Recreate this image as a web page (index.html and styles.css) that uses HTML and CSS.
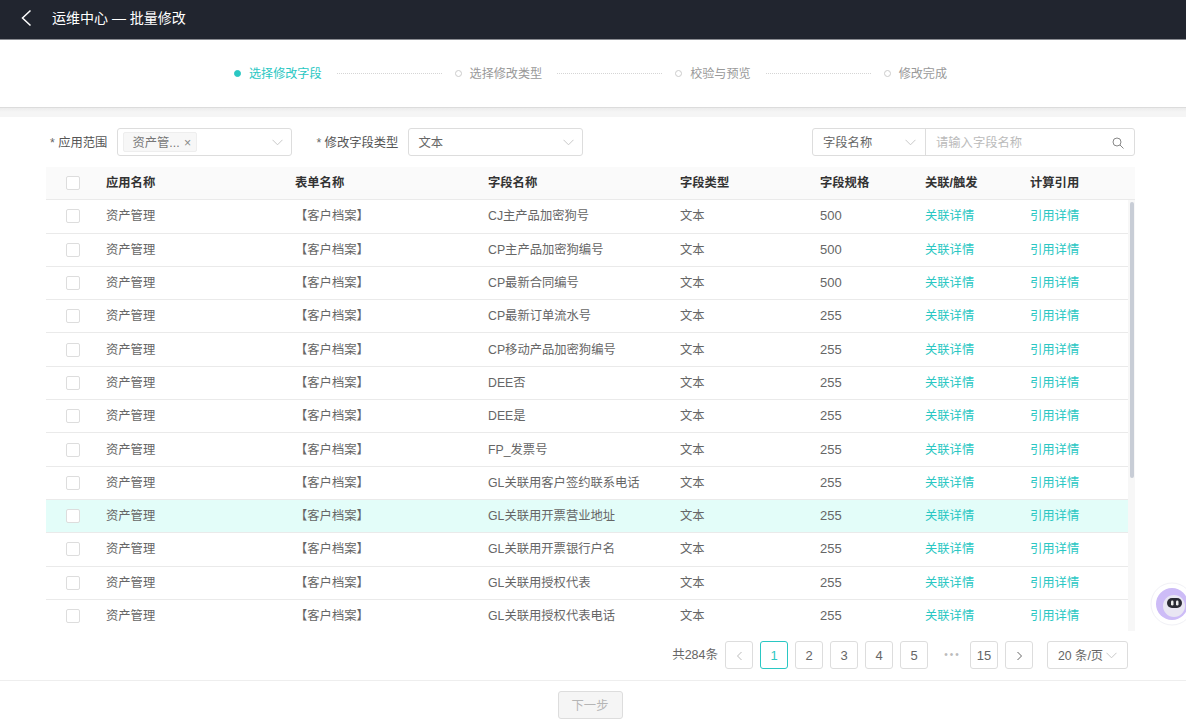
FILE: index.html
```html
<!DOCTYPE html>
<html lang="zh-CN">

<head>
  <meta charset="UTF-8">
  <title>运维中心 — 批量修改</title>
  <link rel="stylesheet" href="styles.css">
</head>

<body>

  <!-- 顶栏 -->
  <header class="topbar">
    <svg class="back" width="12" height="18" viewBox="0 0 12 18"><path d="M10.5 1.5 2.5 9l8 7.5" /></svg>
    <span class="title">运维中心 — 批量修改</span>
  </header>

  <!-- 步骤条 -->
  <div class="steps">
    <span class="dot active"></span><span class="step-name active">选择修改字段</span><span class="step-line"></span>
    <span class="dot"></span><span class="step-name">选择修改类型</span><span class="step-line"></span>
    <span class="dot"></span><span class="step-name">校验与预览</span><span class="step-line"></span>
    <span class="dot"></span><span class="step-name">修改完成</span>
  </div>

  <main class="content">
    <!-- 筛选 -->
    <div class="filters">
      <label class="req">应用范围</label>
      <div class="select scope">
        <span class="tag">资产管... <i>×</i></span>
        <svg class="arrow" width="11" height="7" viewBox="0 0 11 7"><path d="M.5.8l5 5 5-5" /></svg>
      </div>
      <label class="req type-label">修改字段类型</label>
      <div class="select scope">
        <span class="select-text">文本</span>
        <svg class="arrow" width="11" height="7" viewBox="0 0 11 7"><path d="M.5.8l5 5 5-5" /></svg>
      </div>
      <div class="search">
        <div class="search-field">
          <span>字段名称</span>
          <svg class="arrow" width="11" height="7" viewBox="0 0 11 7"><path d="M.5.8l5 5 5-5" /></svg>
        </div>
        <div class="search-input">
          <span>请输入字段名称</span>
          <svg class="glass" width="12" height="12" viewBox="0 0 12 12"><circle cx="5" cy="5" r="4" /><path d="M8 8l3.500 3.500" /></svg>
        </div>
      </div>
    </div>

    <!-- 表格 -->
    <div class="table">
      <div class="row head">
        <span class="check"></span><span>应用名称</span><span>表单名称</span><span>字段名称</span><span>字段类型</span><span>字段规格</span><span>关联/触发</span><span>计算引用</span>
      </div>
      <div class="table-body">
        <div class="rows">
          <div class="row"><span class="check"></span><span>资产管理</span><span>【客户档案】</span><span>CJ主产品加密狗号</span><span>文本</span><span class="num">500</span><a href="#">关联详情</a><a href="#">引用详情</a></div>
          <div class="row"><span class="check"></span><span>资产管理</span><span>【客户档案】</span><span>CP主产品加密狗编号</span><span>文本</span><span class="num">500</span><a href="#">关联详情</a><a href="#">引用详情</a></div>
          <div class="row"><span class="check"></span><span>资产管理</span><span>【客户档案】</span><span>CP最新合同编号</span><span>文本</span><span class="num">500</span><a href="#">关联详情</a><a href="#">引用详情</a></div>
          <div class="row"><span class="check"></span><span>资产管理</span><span>【客户档案】</span><span>CP最新订单流水号</span><span>文本</span><span class="num">255</span><a href="#">关联详情</a><a href="#">引用详情</a></div>
          <div class="row"><span class="check"></span><span>资产管理</span><span>【客户档案】</span><span>CP移动产品加密狗编号</span><span>文本</span><span class="num">255</span><a href="#">关联详情</a><a href="#">引用详情</a></div>
          <div class="row"><span class="check"></span><span>资产管理</span><span>【客户档案】</span><span>DEE否</span><span>文本</span><span class="num">255</span><a href="#">关联详情</a><a href="#">引用详情</a></div>
          <div class="row"><span class="check"></span><span>资产管理</span><span>【客户档案】</span><span>DEE是</span><span>文本</span><span class="num">255</span><a href="#">关联详情</a><a href="#">引用详情</a></div>
          <div class="row"><span class="check"></span><span>资产管理</span><span>【客户档案】</span><span>FP_发票号</span><span>文本</span><span class="num">255</span><a href="#">关联详情</a><a href="#">引用详情</a></div>
          <div class="row"><span class="check"></span><span>资产管理</span><span>【客户档案】</span><span>GL关联用客户签约联系电话</span><span>文本</span><span class="num">255</span><a href="#">关联详情</a><a href="#">引用详情</a></div>
          <div class="row hover"><span class="check"></span><span>资产管理</span><span>【客户档案】</span><span>GL关联用开票营业地址</span><span>文本</span><span class="num">255</span><a href="#">关联详情</a><a href="#">引用详情</a></div>
          <div class="row"><span class="check"></span><span>资产管理</span><span>【客户档案】</span><span>GL关联用开票银行户名</span><span>文本</span><span class="num">255</span><a href="#">关联详情</a><a href="#">引用详情</a></div>
          <div class="row"><span class="check"></span><span>资产管理</span><span>【客户档案】</span><span>GL关联用授权代表</span><span>文本</span><span class="num">255</span><a href="#">关联详情</a><a href="#">引用详情</a></div>
          <div class="row"><span class="check"></span><span>资产管理</span><span>【客户档案】</span><span>GL关联用授权代表电话</span><span>文本</span><span class="num">255</span><a href="#">关联详情</a><a href="#">引用详情</a></div>
        </div>
        <div class="scrollbar"><div class="thumb"></div></div>
      </div>
    </div>

    <!-- 分页 -->
    <div class="pager">
      <span class="total">共284条</span>
      <span class="page prev"><svg width="7" height="10" viewBox="0 0 7 10"><path d="M5.500 1 1.500 5l4 4" /></svg></span>
      <span class="page current">1</span>
      <span class="page">2</span>
      <span class="page">3</span>
      <span class="page">4</span>
      <span class="page">5</span>
      <span class="more">•••</span>
      <span class="page">15</span>
      <span class="page next"><svg width="7" height="10" viewBox="0 0 7 10"><path d="M1.500 1l4 4-4 4" /></svg></span>
      <span class="page-size">20 条/页<svg class="arrow" width="11" height="7" viewBox="0 0 11 7"><path d="M.5.8l5 5 5-5" /></svg></span>
    </div>
  </main>

  <!-- 底部 -->
  <footer class="footer">
    <button type="button" class="next-btn" disabled>下一步</button>
  </footer>

  <!-- 悬浮机器人 -->
  <svg class="robot" width="44" height="44" viewBox="0 0 44 44">
    <circle cx="22" cy="22" r="21" fill="#fff" stroke="#f1f1f6" />
    <circle cx="22" cy="22" r="16" fill="#cdbcf7" />
    <circle cx="24" cy="24" r="11" fill="#e9e6f3" />
    <rect x="17" y="16" width="15" height="10" rx="5" fill="#2b2b35" />
    <rect x="21" y="18.500" width="2.500" height="5" rx="1.200" fill="#eee" />
    <rect x="26" y="18.500" width="2.500" height="5" rx="1.200" fill="#eee" />
  </svg>

</body>

</html>
```

FILE: styles.css
```css
body {
  margin: 0;
  height: 720px;
  display: flex;
  flex-direction: column;
  overflow: hidden;
  background: #fff;
  font-family: "Liberation Sans", "Noto Sans CJK SC", sans-serif;
  font-size: 12.3px;
  line-height: 18px;
  color: #666;
}

/* 顶栏 */
.topbar {
  height: 35px;
  flex: none;
  display: flex;
  align-items: center;
  background: #21252f;
  border-bottom: 1px solid #8a8c92;
  padding: 0 0 4px 20px;
  color: #fff;
}

.back {
  margin-right: 20px;
}

.back path {
  fill: none;
  stroke: #fff;
  stroke-width: 1.5;
}

.title {
  font-size: 14px;
}

/* 步骤条 */
.steps {
  height: 67px;
  flex: none;
  display: flex;
  align-items: center;
  justify-content: center;
  padding-right: 5px;
  border-bottom: 1px solid #dcdcdc;
  color: #999;
  font-size: 12.1px;
}

.dot {
  width: 7px;
  height: 7px;
  box-sizing: border-box;
  border: 1px solid #ccc;
  border-radius: 50%;
  margin-right: 8px;
}

.dot.active {
  background: #2ac7c3;
  border-color: #2ac7c3;
}

.step-name.active {
  color: #2ac7c3;
}

.step-line {
  width: 105px;
  margin: 0 13px 0 15px;
  border-top: 1px dotted #d5d5d5;
}

/* 内容 */
.content {
  flex: 1;
  padding: 20px 51px 0 46px;
  background: linear-gradient(#ececec, #f5f5f5 4px) top / 100% 9px no-repeat;
  min-height: 0;
  display: flex;
  flex-direction: column;
}

.filters {
  display: flex;
  align-items: center;
  height: 28px;
  flex: none;
}

.req {
  color: #555;
  margin-left: 4px;
  margin-right: 10px;
  padding-top: 1px;
}

.req::before {
  content: "* ";
  color: #666;
}

.type-label {
  margin-left: 24px;
}

.select {
  position: relative;
  height: 28px;
  box-sizing: border-box;
  border: 1px solid #ddd;
  border-radius: 3px;
  display: flex;
  align-items: center;
}

.scope {
  width: 175px;
}

.tag {
  margin-left: 5px;
  padding: 1px 6px 0 8px;
  height: 20px;
  width: 74px;
  box-sizing: border-box;
  background: #f7f7f7;
  border: 1px solid #eee;
  border-radius: 2px;
  white-space: nowrap;
  color: #777;
}

.tag i {
  font-style: normal;
  margin-left: 1px;
  color: #888;
}

.select-text {
  margin-left: 9px;
  padding-top: 1px;
}

.arrow path {
  fill: none;
  stroke: #c8c8c8;
}

.select .arrow {
  position: absolute;
  right: 8px;
  top: 10px;
}

.search {
  margin-left: auto;
  display: flex;
  width: 323px;
  height: 28px;
  box-sizing: border-box;
  border: 1px solid #ddd;
  border-radius: 3px;
}

.search-field {
  width: 113px;
  box-sizing: border-box;
  border-right: 1px solid #ddd;
  padding: 1px 9px 0 10px;
  display: flex;
  align-items: center;
  justify-content: space-between;
}

.search-input {
  flex: 1;
  display: flex;
  align-items: center;
  justify-content: space-between;
  padding: 1px 10px 0;
  color: #bbb;
}

.glass circle,
.glass path {
  fill: none;
  stroke: #888;
}

/* 表格 */
.table {
  margin-top: 11px;
  flex: none;
}

.row {
  display: grid;
  grid-template-columns: 60px 189px 193px 192px 140px 105px 105px 98px;
  align-items: center;
  height: 33.3px;
  box-sizing: border-box;
  border-bottom: 1px solid #eaeaea;
}

.row.head {
  background: #fafafa;
  color: #333;
  font-weight: bold;
}

.row.hover {
  background: #e3fdf9;
}

.row a {
  color: #2ac7c3;
  text-decoration: none;
}

.num {
  font-size: 13px;
}

.check {
  width: 14px;
  height: 14px;
  margin-left: 20px;
  box-sizing: border-box;
  border: 1px solid #ddd;
  border-radius: 2px;
  background: #fff;
}

.table-body {
  display: flex;
  height: 431px;
  overflow: hidden;
}

.rows {
  width: 1082px;
  flex: none;
}

.scrollbar {
  flex: 1;
  background: #f7f7f7;
}

.thumb {
  width: 4px;
  height: 276px;
  margin: 2px auto 0;
  background: #c8cdd6;
  border-radius: 2px;
}

/* 分页 */
.pager {
  display: flex;
  align-items: center;
  justify-content: flex-end;
  flex: none;
  margin-top: 10px;
  padding-right: 7px;
  height: 28px;
}

.total {
  margin-right: 7px;
  font-size: 12.5px;
}

.page {
  width: 28px;
  height: 28px;
  margin-right: 7px;
  padding-top: 1px;
  box-sizing: border-box;
  border: 1px solid #ddd;
  border-radius: 3px;
  display: flex;
  align-items: center;
  justify-content: center;
  font-size: 13px;
}

.page svg path {
  fill: none;
  stroke: #666;
}

.page.prev svg path {
  stroke: #bbb;
}

.page.current {
  border-color: #2ac7c3;
  color: #2ac7c3;
}

.page.next {
  margin-right: 14px;
}

.more {
  width: 35px;
  text-align: center;
  color: #bbb;
  font-size: 10px;
  letter-spacing: 2px;
}

.page-size {
  width: 81px;
  height: 28px;
  box-sizing: border-box;
  border: 1px solid #ddd;
  border-radius: 3px;
  display: flex;
  align-items: center;
  justify-content: space-between;
  padding: 1px 10px 0;
  white-space: nowrap;
}

/* 底部 */
.footer {
  height: 29px;
  flex: none;
  border-top: 1px solid #eee;
  display: flex;
  justify-content: center;
  padding-top: 10px;
  padding-right: 6px;
}

.next-btn {
  width: 65px;
  height: 28px;
  padding-top: 2px;
  border: 1px solid #ddd;
  border-radius: 3px;
  background: #f5f5f5;
  color: #b5b5b5;
  font: inherit;
}

.robot {
  position: absolute;
  left: 1150px;
  top: 582px;
}
```
